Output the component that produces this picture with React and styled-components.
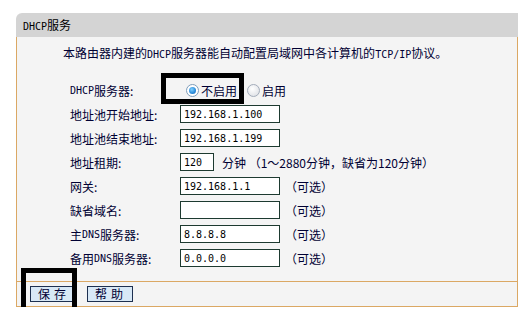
import React from "react";
import styled, { createGlobalStyle } from "styled-components";

const GlobalStyle = createGlobalStyle`
  html, body {
    margin: 0;
    padding: 0;
    background: #ffffff;
  }
  body {
    font-family: "Noto Sans CJK SC", "DejaVu Sans", sans-serif;
    font-size: 12px;
    color: #000033;
  }
  * { box-sizing: border-box; }
`;

const orange = "#dba864";

const Panel = styled.div`
  position: relative;
  margin: 13px 0 0 16px;
  width: 502px;
`;

const Header = styled.div`
  height: 24px;
  line-height: 24px;
  background: #d4d4d4;
  border-top-left-radius: 6px;
  padding-left: 7px;
  color: #000000;
`;

const Body = styled.div`
  background: #f4f4f4;
  border-left: 1px solid ${orange};
  border-right: 1px solid ${orange};
  padding: 9px 0 11px 0;
`;

const Intro = styled.div`
  line-height: 14px;
  padding-left: 46px;
`;

const Latin = styled.span`
  font-family: "DejaVu Sans Mono", "Liberation Mono", monospace;
  font-size: 10px;
`;

const Form = styled.div`
  display: grid;
  grid-template-columns: 110px 1fr;
  grid-auto-rows: 24px;
  margin-top: 16px;
  padding-left: 53px;
`;

const Label = styled.div`
  display: flex;
  align-items: center;
  white-space: nowrap;
`;

const Field = styled.div`
  display: flex;
  align-items: center;
  white-space: nowrap;
`;

const TextBox = styled.div`
  width: ${(p) => p.$w || 100}px;
  height: 18px;
  border: 1px solid #1d3a30;
  background: #ffffff;
  padding-left: 3px;
  display: flex;
  align-items: center;
  font-family: "DejaVu Sans Mono", "Liberation Mono", monospace;
  font-size: 10px;
  color: #000000;
`;

const Hint = styled.span`
  margin-left: ${(p) => p.$gap || 6}px;
`;

const RadioGroup = styled.label`
  display: flex;
  align-items: center;
  margin-left: ${(p) => p.$gap}px;
`;

const RadioDot = styled.span`
  position: relative;
  width: 13px;
  height: 13px;
  border-radius: 50%;
  border: 1px solid ${(p) => (p.$on ? "#7f9db9" : "#a3acba")};
  background: ${(p) =>
    p.$on
      ? "#ffffff"
      : "radial-gradient(circle at 40% 35%, #ffffff 0%, #e4e6ea 70%, #d2d5da 100%)"};
  margin-right: 2px;
  &::after {
    content: "";
    display: ${(p) => (p.$on ? "block" : "none")};
    position: absolute;
    left: 2px;
    top: 2px;
    width: 7px;
    height: 7px;
    border-radius: 50%;
    background: radial-gradient(circle at 40% 35%, #7fd0ff 0%, #2a8ad8 60%, #1f6cb8 100%);
  }
`;

const Footer = styled.div`
  background: #f4f4f4;
  border: 1px solid ${orange};
  height: 26px;
  display: flex;
  align-items: center;
  gap: 11px;
  padding-left: 13px;
`;

const Button = styled.button`
  height: 16px;
  padding: 0 5px;
  background: #d8e8f6;
  border: 1px solid #1d3050;
  font-family: "Noto Sans CJK SC", sans-serif;
  font-size: 12px;
  line-height: 14px;
  color: #000033;
  letter-spacing: 4px;
  text-indent: 2px;
  cursor: pointer;
`;

const Highlight = styled.div`
  position: absolute;
  left: ${(p) => p.$x}px;
  top: ${(p) => p.$y}px;
  width: ${(p) => p.$w}px;
  height: ${(p) => p.$h}px;
  border: 5px solid #000000;
  pointer-events: none;
`;

const rows = [
  { label: "地址池开始地址:", value: "192.168.1.100" },
  { label: "地址池结束地址:", value: "192.168.1.199" },
];

const optional = [
  { label: "网关:", value: "192.168.1.1" },
  { label: "缺省域名:", value: "" },
  { label: <>主<Latin>DNS</Latin>服务器:</>, value: "8.8.8.8" },
  { label: <>备用<Latin>DNS</Latin>服务器:</>, value: "0.0.0.0" },
];

export default function App() {
  return (
    <>
      <GlobalStyle />
      <Panel>
        <Header>
          <Latin>DHCP</Latin>服务
        </Header>
        <Body>
          <Intro>
            本路由器内建的<Latin>DHCP</Latin>服务器能自动配置局域网中各计算机的<Latin>TCP/IP</Latin>协议。
          </Intro>
          <Form>
            <Label>
              <Latin>DHCP</Latin>服务器:
            </Label>
            <Field>
              <RadioGroup $gap={6}>
                <RadioDot $on />
                不启用
              </RadioGroup>
              <RadioGroup $gap={10}>
                <RadioDot />
                启用
              </RadioGroup>
            </Field>
            {rows.map((r, i) => (
              <React.Fragment key={i}>
                <Label>{r.label}</Label>
                <Field>
                  <TextBox>{r.value}</TextBox>
                </Field>
              </React.Fragment>
            ))}
            <Label>地址租期:</Label>
            <Field>
              <TextBox $w={34}>120</TextBox>
              <Hint $gap={8}>分钟 （1～2880分钟，缺省为120分钟）</Hint>
            </Field>
            {optional.map((r, i) => (
              <React.Fragment key={i}>
                <Label>{r.label}</Label>
                <Field>
                  <TextBox>{r.value}</TextBox>
                  <Hint $gap={5}>（可选）</Hint>
                </Field>
              </React.Fragment>
            ))}
          </Form>
        </Body>
        <Footer>
          <Button>保存</Button>
          <Button>帮助</Button>
        </Footer>
        <Highlight $x={145} $y={60} $w={83} $h={31} />
        <Highlight $x={5} $y={255} $w={56} $h={45} />
      </Panel>
    </>
  );
}
